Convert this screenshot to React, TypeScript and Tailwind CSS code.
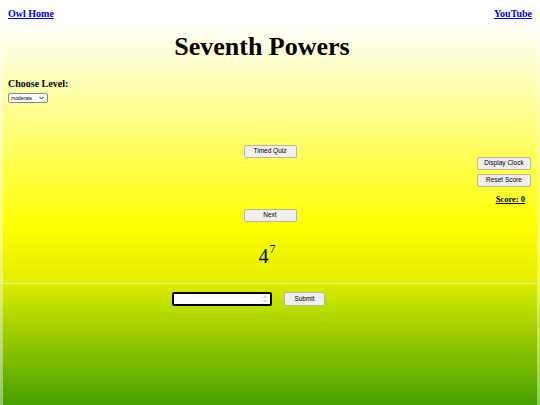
import React from 'react';

const btn =
  "h-[13px] bg-[#efefef] border border-[#b8b8a0] rounded-[2px] text-[6.5px] leading-none text-black font-['Liberation_Sans',Arial,sans-serif] flex items-center justify-center";

const App: React.FC = () => {
  return (
    <div className="w-[540px] h-[405px] overflow-hidden bg-white font-['Liberation_Serif','Times_New_Roman',serif] text-black">
      {/* upper quiz area */}
      <div className="h-[283px] border-x-[3px] border-white/40 bg-[linear-gradient(to_bottom,#ffffff_8%,#ffffa0_35%,#ffff00_80%,#e3ed00_100%)] pt-[8px]">
        <div className="flex justify-between px-[5px] text-[10px] leading-[12px] font-bold">
          <a href="#" className="text-[#0000ee] underline">Owl Home</a>
          <a href="#" className="text-[#0000ee] underline">YouTube</a>
        </div>

        <h1 className="mt-[12px] pr-[16px] text-center text-[26px] leading-[30px] font-bold">Seventh Powers</h1>

        <div className="mt-[16px] px-[5px] text-[10px] leading-[12px] font-bold">Choose Level:</div>
        <div className="mt-[3px] px-[5px]">
          <div className="w-[40px] h-[10px] bg-white border border-[#8a8a8a] rounded-[2px] flex items-center justify-between pl-[2px] pr-[3px] text-[5px] leading-none font-['Liberation_Sans',Arial,sans-serif]">
            <span>moderate</span>
            <svg width="5" height="4" viewBox="0 0 5 4">
              <path d="M0.5 1 L2.5 3 L4.5 1" fill="none" stroke="#222" strokeWidth="1" />
            </svg>
          </div>
        </div>

        <div className="mt-[42px] grid grid-cols-[1fr_53px_1fr]">
          <div />
          <div className="flex flex-col items-center">
            <button className={`${btn} w-[53px]`}>Timed Quiz</button>
            <button className={`${btn} w-[53px] mt-[51px]`}>Next</button>
            <div className="mt-[22px] mr-[6px] text-[20px] leading-[24px] flex items-start">
              <span>4</span>
              <span className="text-[12px] leading-[12px] -mt-[1px] ml-[1px]">7</span>
            </div>
          </div>
          <div className="flex flex-col items-end pr-[6px] pt-[12px]">
            <button className={`${btn} w-[54px]`}>Display Clock</button>
            <button className={`${btn} w-[54px] mt-[4px]`}>Reset Score</button>
            <div className="mt-[7px] mr-[6px] text-[8.5px] leading-[10px] font-bold underline">Score: 0</div>
          </div>
        </div>
      </div>

      <div className="h-px bg-[#eef08c]" />

      {/* answer area */}
      <div className="h-[121px] border-x-[3px] border-white/40 bg-[linear-gradient(to_bottom,#dcec00,#45a000)] pt-[8px]">
        <div className="flex justify-center pr-[43px]">
          <div className="w-[100px] h-[14px] bg-white border-2 border-black rounded-[2px] flex items-center justify-end pr-[3px]">
            <svg width="4" height="8" viewBox="0 0 4 8">
              <path d="M0.5 3 L2 1.5 L3.5 3" fill="none" stroke="#888" strokeWidth="0.7" />
              <path d="M0.5 5 L2 6.5 L3.5 5" fill="none" stroke="#888" strokeWidth="0.7" />
            </svg>
          </div>
          <button className={`${btn} w-[41px] h-[14px] ml-[12px]`}>Submit</button>
        </div>
      </div>
    </div>
  );
};

export default App;
